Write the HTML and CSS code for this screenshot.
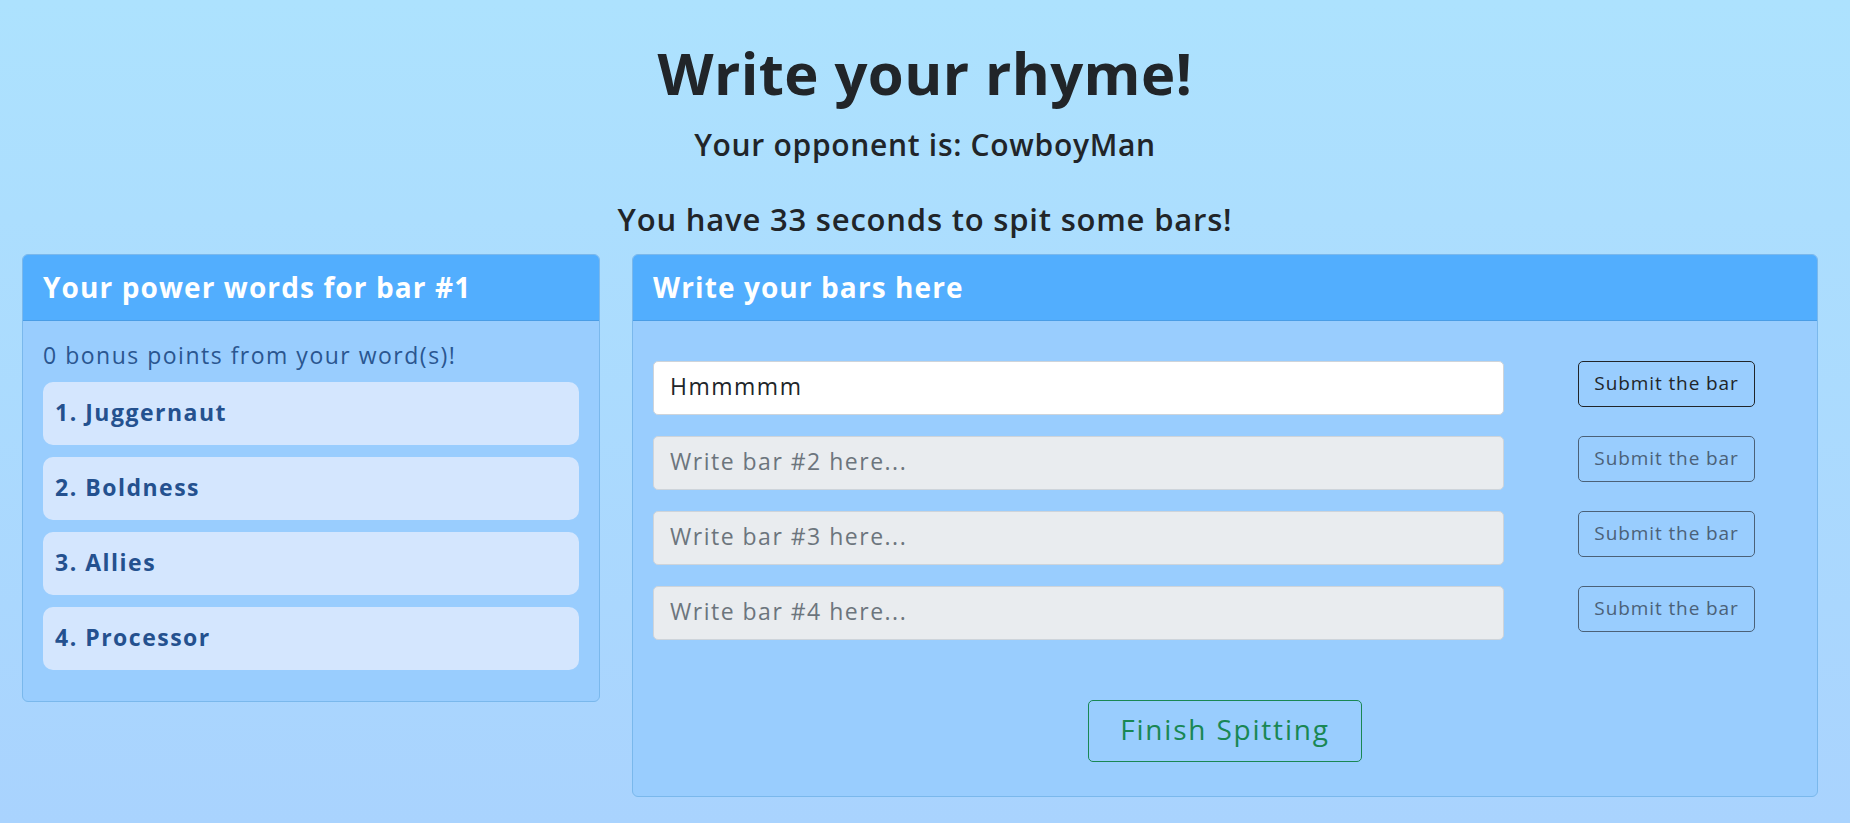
FILE: index.html
```html
<!DOCTYPE html>
<html lang="en">
<head>
<meta charset="utf-8">
<title>Write your rhyme!</title>
<link rel="stylesheet" href="styles.css">
</head>
<body>
<header class="intro">
  <h1 class="title">Write your rhyme!</h1>
  <h2 class="opponent">Your opponent is: CowboyMan</h2>
  <h3 class="timer">You have 33 seconds to spit some bars!</h3>
</header>
<main class="board">
  <section class="card words">
    <div class="card-head">Your power words for bar #1</div>
    <div class="card-body words-body">
      <p class="bonus">0 bonus points from your word(s)!</p>
      <ul class="word-list">
        <li class="word">1. Juggernaut</li>
        <li class="word">2. Boldness</li>
        <li class="word">3. Allies</li>
        <li class="word">4. Processor</li>
      </ul>
    </div>
  </section>
  <section class="card bars">
    <div class="card-head">Write your bars here</div>
    <div class="card-body bars-body">
      <div class="bar-row">
        <input class="bar-input" type="text" value="Hmmmmm">
        <button class="submit-btn" type="button">Submit the bar</button>
      </div>
      <div class="bar-row">
        <input class="bar-input" type="text" placeholder="Write bar #2 here..." disabled>
        <button class="submit-btn" type="button" disabled>Submit the bar</button>
      </div>
      <div class="bar-row">
        <input class="bar-input" type="text" placeholder="Write bar #3 here..." disabled>
        <button class="submit-btn" type="button" disabled>Submit the bar</button>
      </div>
      <div class="bar-row">
        <input class="bar-input" type="text" placeholder="Write bar #4 here..." disabled>
        <button class="submit-btn" type="button" disabled>Submit the bar</button>
      </div>
      <div class="finish-wrap">
        <button class="finish-btn" type="button">Finish Spitting</button>
      </div>
    </div>
  </section>
</main>
</body>
</html>
```

FILE: styles.css
```css
* { box-sizing: border-box; }

html, body {
  margin: 0;
  padding: 0;
}

body {
  min-height: 823px;
  background: linear-gradient(180deg, #ade2fe 0%, #a9d3fe 100%);
  font-family: "Open Sans", "DejaVu Sans", sans-serif;
  color: #212529;
}

.intro {
  text-align: center;
  padding-top: 37px;
}

.title {
  margin: 0;
  font-size: 58px;
  line-height: 72px;
  font-weight: 700;
  letter-spacing: 0.4px;
}

.opponent {
  margin: 18px 0 0;
  font-size: 30px;
  line-height: 36px;
  font-weight: 600;
  letter-spacing: 0.7px;
}

.timer {
  margin: 38px 0 0;
  font-size: 31px;
  line-height: 36px;
  font-weight: 600;
  letter-spacing: 0.8px;
}

.board {
  display: flex;
  align-items: flex-start;
  gap: 32px;
  padding-left: 22px;
  margin-top: 17px;
}

.card {
  background: #99cdfe;
  border: 1px solid #7ab8ec;
  border-radius: 6px;
  overflow: hidden;
}

.words { width: 578px; }
.bars { width: 1186px; }

.card-head {
  height: 66px;
  display: flex;
  align-items: center;
  padding: 0 20px 2px;
  background: #52aefe;
  border-bottom: 1px solid #4a9de6;
  color: #ffffff;
  font-size: 28px;
  font-weight: 700;
  letter-spacing: 1.1px;
}

.words-body {
  padding: 18px 20px 31px;
}

.bonus {
  margin: 0 0 10px;
  font-size: 23px;
  line-height: 33px;
  color: #2a5690;
  letter-spacing: 1.5px;
}

.word-list {
  list-style: none;
  margin: 0;
  padding: 0;
  display: flex;
  flex-direction: column;
  gap: 12px;
}

.word {
  height: 63px;
  display: flex;
  align-items: center;
  padding: 0 0 4px 12px;
  background: #d4e6fe;
  border-radius: 10px;
  color: #24518f;
  font-size: 23px;
  font-weight: 700;
  letter-spacing: 1.5px;
}

.bars-body {
  padding: 40px 20px 34px;
  display: flex;
  flex-direction: column;
  gap: 21px;
}

.bar-row {
  display: flex;
  align-items: flex-start;
}

.bar-input {
  width: 851px;
  height: 54px;
  padding: 0 16px 4px;
  border: 1px solid #ced4da;
  border-radius: 5px;
  background: #ffffff;
  font-family: inherit;
  font-size: 23px;
  letter-spacing: 1.5px;
  color: #212529;
}

.bar-input:disabled {
  background: #e9ecef;
}

.bar-input::placeholder {
  color: #6c757d;
  opacity: 1;
}

.submit-btn {
  margin-left: 74px;
  width: 177px;
  height: 46px;
  padding: 0 0 2px;
  background: transparent;
  border: 1px solid #212529;
  border-radius: 5px;
  font-family: inherit;
  font-size: 19px;
  letter-spacing: 0.9px;
  color: #212529;
}

.submit-btn:disabled {
  border-color: #4b6178;
  color: #4b6178;
}

.finish-wrap {
  display: flex;
  justify-content: center;
  margin-top: 39px;
}

.finish-btn {
  width: 274px;
  height: 62px;
  padding: 0 0 5px;
  background: transparent;
  border: 1px solid #198754;
  border-radius: 5px;
  font-family: inherit;
  font-size: 28px;
  letter-spacing: 1.8px;
  color: #198754;
}
```
